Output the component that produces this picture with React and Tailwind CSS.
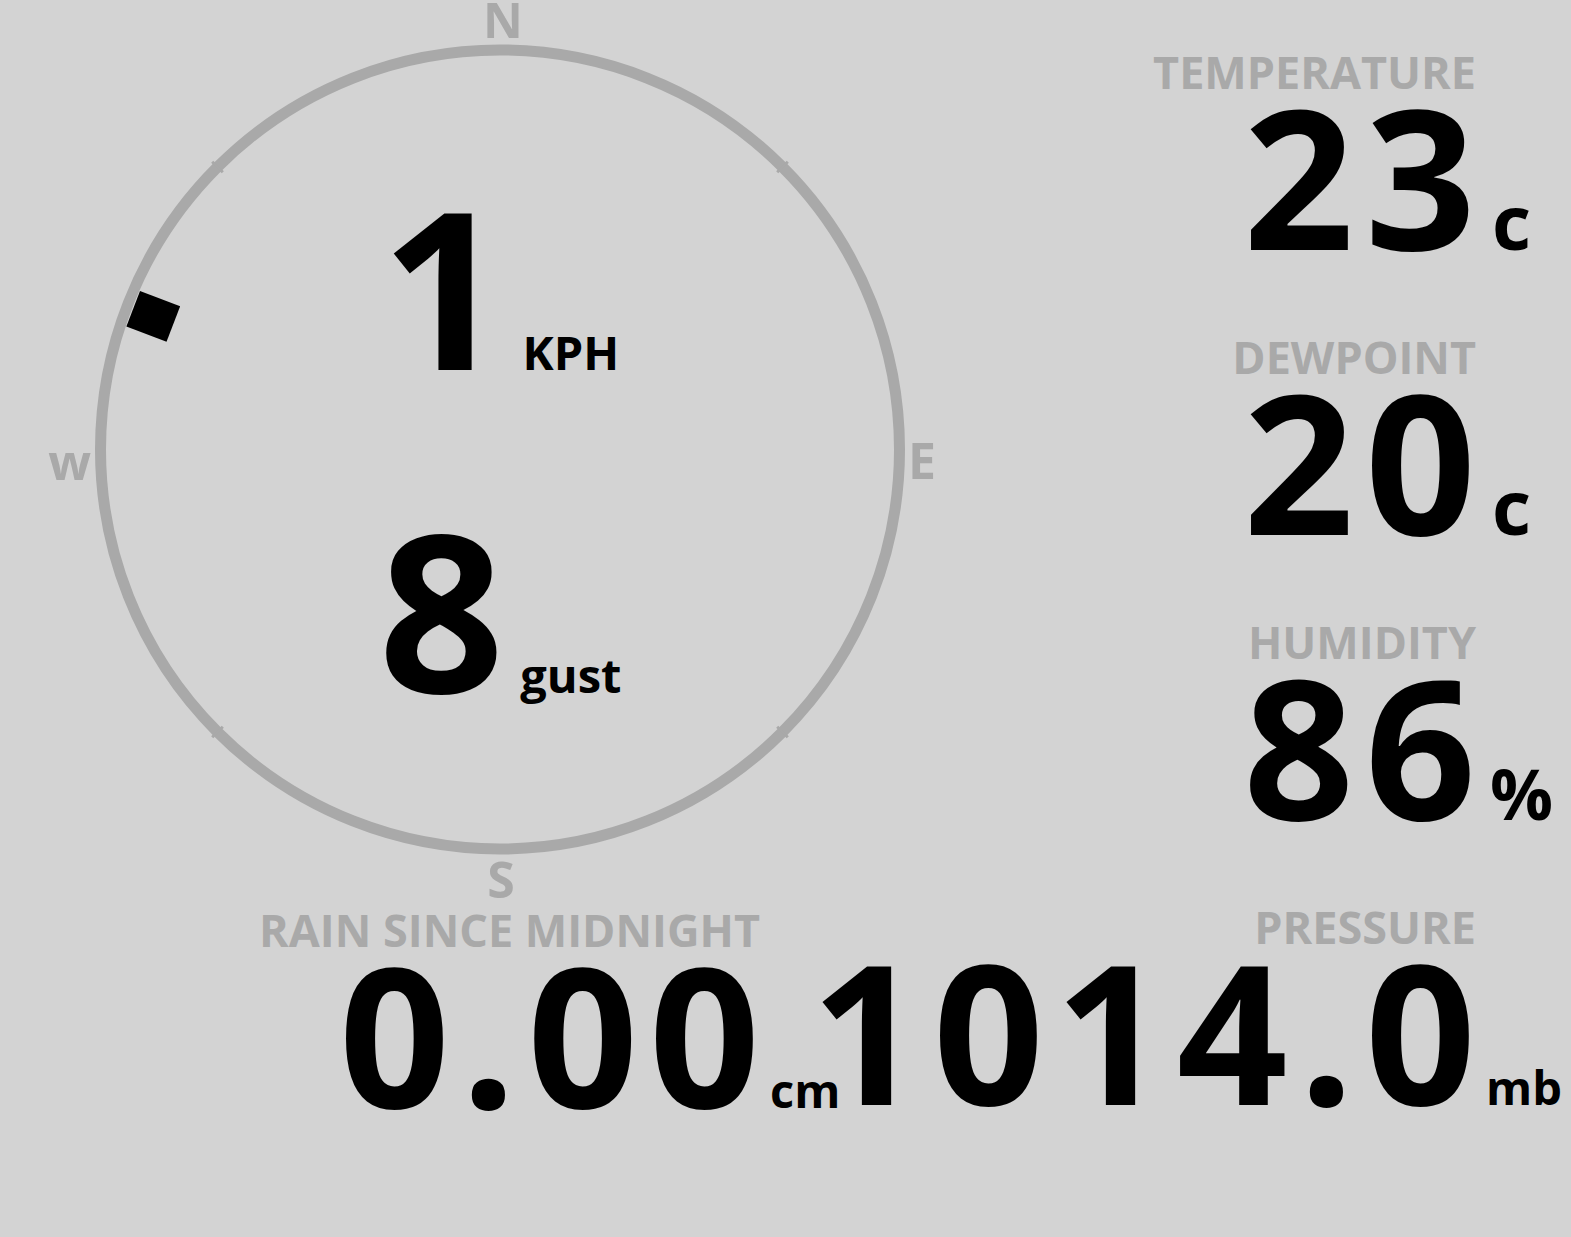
const CX = 450;
const CY = 449.5;
const R = 399.5;
const WIND_DIR = 291;

function Label({ children }) {
  return <div className="text-[45px] leading-[45px] text-[#a9a9a9] whitespace-nowrap">{children}</div>;
}

function Reading({ value, unit, unitClass }) {
  return (
    <div className="flex items-baseline mt-[-16px]">
      <span className="text-[194px] leading-none tracking-[11px] -mr-[11px] whitespace-nowrap">{value}</span>
      <span className="w-0 whitespace-nowrap">
        <span className={unitClass}>{unit}</span>
      </span>
    </div>
  );
}

function Block({ label, value, unit, unitClass }) {
  return (
    <div className="flex flex-col items-end">
      <Label>{label}</Label>
      <Reading value={value} unit={unit} unitClass={unitClass} />
    </div>
  );
}

function Compass() {
  const ticks = [45, 135, 225, 315].map((a) => {
    const t = (a * Math.PI) / 180;
    return {
      x1: CX + 392 * Math.sin(t),
      y1: CY - 392 * Math.cos(t),
      x2: CX + 407 * Math.sin(t),
      y2: CY - 407 * Math.cos(t),
    };
  });

  return (
    <div className="relative w-[900px] h-[900px] ml-[50px] shrink-0 flex flex-col items-center pt-[175px]">
      <svg className="absolute inset-0 overflow-visible" width="900" height="900" viewBox="0 0 900 900">
        <circle cx={CX} cy={CY} r={R} fill="none" stroke="#a9a9a9" strokeWidth="11" />
        {ticks.map((t, i) => (
          <line key={i} {...t} stroke="#a9a9a9" strokeWidth="3" />
        ))}
        <rect
          x={CX - 19}
          y={CY - 371.4 - 21.5}
          width="38"
          height="43"
          fill="#000"
          transform={`rotate(${WIND_DIR} ${CX} ${CY})`}
        />
      </svg>
      <span className="absolute left-[453px] top-[1px] -translate-x-1/2 text-[49px] leading-[36px] text-[#a9a9a9]">N</span>
      <span className="absolute left-[858px] top-[435px] text-[50px] leading-none text-[#a9a9a9]">E</span>
      <span className="absolute left-[451px] top-[854px] -translate-x-1/2 text-[50px] leading-none text-[#a9a9a9]">S</span>
      <span className="absolute right-[859px] top-[436px] text-[50px] leading-none text-[#a9a9a9]">w</span>

      <div className="relative flex items-baseline gap-4">
        <span className="text-[220px] leading-none">1</span>
        <span className="text-[47px] leading-none">KPH</span>
      </div>
      <div className="relative flex items-baseline gap-4 mt-[103px]">
        <span className="text-[220px] leading-none">8</span>
        <span className="text-[47px] leading-none">gust</span>
      </div>
    </div>
  );
}

export default function App() {
  return (
    <div className="w-[1571px] h-[1237px] overflow-hidden bg-[#d3d3d3] text-black font-bold font-['Open_Sans',sans-serif] flex">
      <div className="w-[950px] shrink-0 flex flex-col">
        <Compass />
        <div className="flex flex-col items-end mr-[190px] mt-[7px]">
          <Block label="RAIN SINCE MIDNIGHT" value="0.00" unit="cm" unitClass="block pl-[10px] text-[47px] leading-none" />
        </div>
      </div>
      <div className="w-[621px] min-w-0 flex flex-col items-end gap-[62px] pr-[95px] pt-[49px]">
        <Block label="TEMPERATURE" value="23" unit="c" unitClass="block pl-[16px] text-[76px] leading-none" />
        <Block label="DEWPOINT" value="20" unit="c" unitClass="block pl-[16px] text-[76px] leading-none" />
        <Block label="HUMIDITY" value="86" unit="%" unitClass="block pl-[14px] text-[70px] leading-none" />
        <Block label="PRESSURE" value="1014.0" unit="mb" unitClass="block pl-[10px] text-[47px] leading-none" />
      </div>
    </div>
  );
}
